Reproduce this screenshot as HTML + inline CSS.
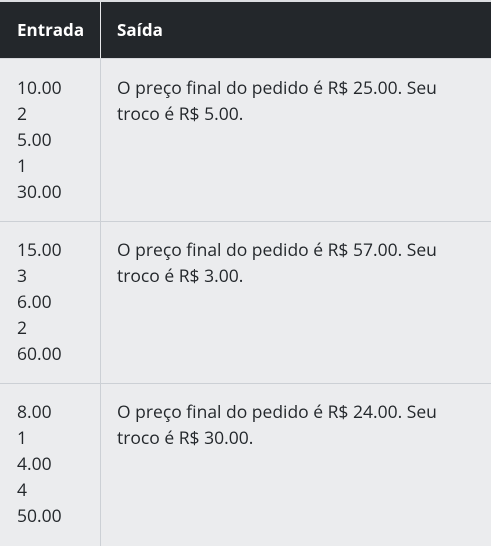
<!DOCTYPE html>
<html><head><style>
body{margin:0;width:491px;height:546px;overflow:hidden;background:#ebecee;font-family:"Open Sans","Liberation Sans",sans-serif;color:#23272b;}
.top{height:2px;background:#dcdee1}
.hd{position:absolute;top:2px;left:0;width:491px;height:56px;background:#23272b;color:#fff;font-weight:bold;font-size:17px}
.hd span{position:absolute;top:16px}
.vl{position:absolute;left:100px;width:1px;background:#ccd0d5}
.hl{position:absolute;left:0;width:491px;height:1px;background:#ccd0d5}
.t{position:absolute;font-size:17.5px;line-height:26px}
</style></head><body>
<div class="top"></div>
<div class="hd"><span style="left:17px">Entrada</span><span style="left:117px">Saída</span></div>
<div class="vl" style="top:2px;height:56px;background:#e8e9eb"></div>
<div class="hl" style="top:58px;background:#d6d8dc"></div>
<div class="vl" style="top:59px;height:487px"></div>
<div class="hl" style="top:221px"></div>
<div class="hl" style="top:383px"></div>
<div class="t" style="left:17px;top:75px">10.00<br>2<br>5.00<br>1<br>30.00</div>
<div class="t" style="left:117px;top:75px">O preço final do pedido é R$ 25.00. Seu<br>troco é R$ 5.00.</div>
<div class="t" style="left:17px;top:237px">15.00<br>3<br>6.00<br>2<br>60.00</div>
<div class="t" style="left:117px;top:237px">O preço final do pedido é R$ 57.00. Seu<br>troco é R$ 3.00.</div>
<div class="t" style="left:17px;top:399px">8.00<br>1<br>4.00<br>4<br>50.00</div>
<div class="t" style="left:117px;top:399px">O preço final do pedido é R$ 24.00. Seu<br>troco é R$ 30.00.</div>
</body></html>
